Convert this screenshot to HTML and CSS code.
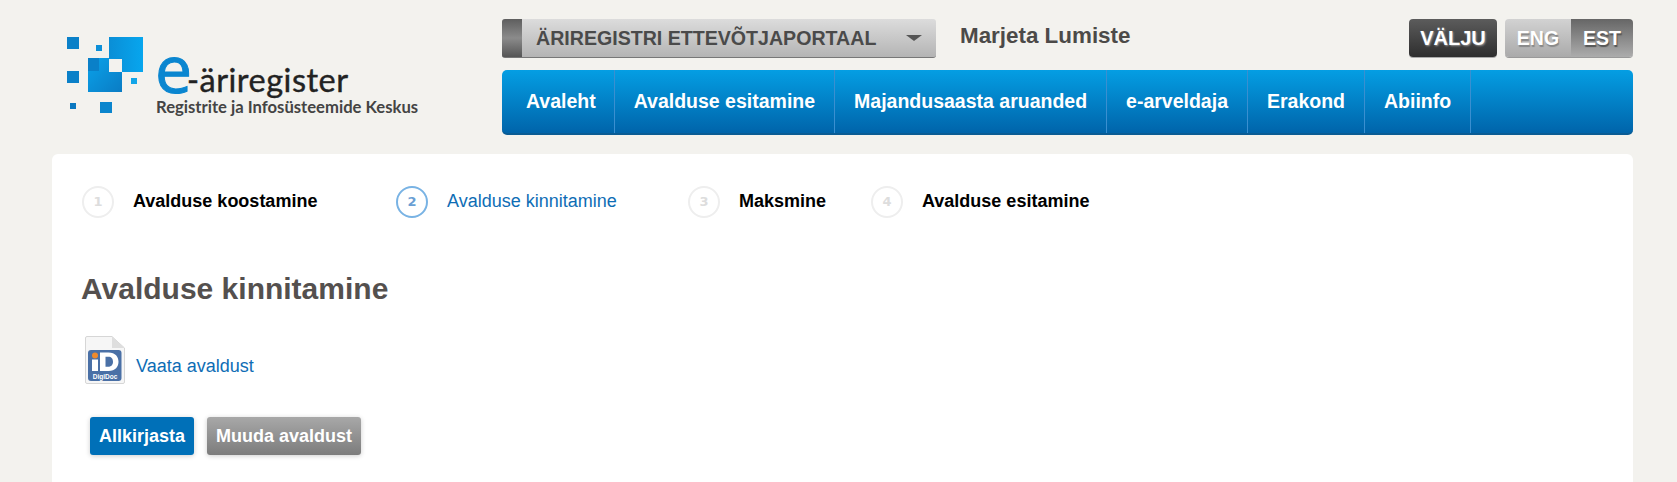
FILE: index.html
```html
<!DOCTYPE html>
<html lang="et">

<head>
    <meta charset="UTF-8">
    <meta name="viewport" content="width=device-width, initial-scale=1.0">
    <title>e-äriregister</title>
    <link rel="stylesheet" href="styles.css">
</head>

<body>
    <header class="header">
        <a class="logo" href="#">
            <svg width="450" height="110" viewBox="0 0 450 110">
                <defs>
                    <linearGradient id="blueA" x1="0" y1="0" x2="1" y2="0">
                        <stop offset="0" stop-color="#0a8ed6"/>
                        <stop offset="1" stop-color="#07a6ee"/>
                    </linearGradient>
                    <linearGradient id="blueB" x1="0" y1="0" x2="1" y2="1">
                        <stop offset="0" stop-color="#0aa2ea"/>
                        <stop offset="1" stop-color="#0a7cc4"/>
                    </linearGradient>
                </defs>
                <g class="logo-squares">
                    <rect x="15" y="17" width="12" height="12" fill="#0a80c8"/>
                    <rect x="44" y="25" width="6" height="6" fill="#0c8fd8"/>
                    <rect x="15" y="51" width="12" height="12" fill="#0a80c8"/>
                    <rect x="57" y="17" width="34" height="35" fill="url(#blueA)"/>
                    <rect x="36" y="38" width="34" height="34" fill="url(#blueB)"/>
                    <rect x="36" y="38" width="11" height="13" fill="#0a80c8"/>
                    <rect x="57" y="39" width="13" height="13" fill="#f3f2ee"/>
                    <rect x="79" y="58" width="6" height="6" fill="#11a5e8"/>
                    <rect x="18" y="83" width="6" height="6" fill="#0a78c0"/>
                    <rect x="48" y="82" width="12" height="11" fill="#0a85cd"/>
                </g>
                <text x="103" y="73"><tspan class="logo-e">e</tspan><tspan class="logo-name" x="135" y="72">-äriregister</tspan></text>
                <text class="logo-sub" x="104" y="93">Registrite ja Infosüsteemide Keskus</text>
            </svg>
        </a>

        <div class="header-right">
            <div class="top-row">
                <div class="portal-select">
                    <span class="portal-name">ÄRIREGISTRI ETTEVÕTJAPORTAAL</span>
                    <span class="portal-arrow"></span>
                </div>
                <span class="user-name">Marjeta Lumiste</span>
                <a class="logout" href="#">VÄLJU</a>
                <div class="lang">
                    <a class="lang-item" href="#">ENG</a>
                    <a class="lang-item active" href="#">EST</a>
                </div>
            </div>

            <nav class="menu">
                <a class="menu-item first" href="#">Avaleht</a>
                <a class="menu-item" href="#">Avalduse esitamine</a>
                <a class="menu-item" href="#">Majandusaasta aruanded</a>
                <a class="menu-item" href="#">e-arveldaja</a>
                <a class="menu-item" href="#">Erakond</a>
                <a class="menu-item" href="#">Abiinfo</a>
            </nav>
        </div>
    </header>

    <main class="card">
        <ol class="steps">
            <li class="step step-1"><span class="step-num">1</span><span class="step-label">Avalduse koostamine</span></li>
            <li class="step step-2 current"><span class="step-num">2</span><span class="step-label">Avalduse kinnitamine</span></li>
            <li class="step step-3"><span class="step-num">3</span><span class="step-label">Maksmine</span></li>
            <li class="step"><span class="step-num">4</span><span class="step-label">Avalduse esitamine</span></li>
        </ol>

        <h1 class="title">Avalduse kinnitamine</h1>

        <div class="document">
            <svg class="doc-icon" width="40" height="48" viewBox="0 0 40 48">
                <path d="M2 .5H27L39.500 12V46a1.500 1.500 0 0 1-1.500 1.500H2A1.500 1.500 0 0 1 .5 46V2A1.500 1.500 0 0 1 2 .5z" fill="#f6f6f6" stroke="#d6d6d6"/>
                <path d="M27 .5V12H39.500z" fill="#dedede"/>
                <rect x="3" y="14" width="33.500" height="31" rx="3" fill="#4a70a6"/>
                <circle cx="10" cy="19.500" r="3" fill="#ef8a2c"/>
                <rect x="7" y="23.500" width="6" height="11.500" fill="#fff"/>
                <path d="M15 16.500h8.500c7 0 10 4.500 10 9.300s-3 9.200-10 9.200H15zm5.500 4.300v9.900h2.700c3.300 0 4.800-2.200 4.800-5s-1.500-4.900-4.800-4.900z" fill="#fff"/>
                <text class="doc-label" x="20" y="42.500" text-anchor="middle">DigiDoc</text>
            </svg>
            <a class="doc-link" href="#">Vaata avaldust</a>
        </div>

        <div class="actions">
            <button class="btn btn-primary" type="button">Allkirjasta</button>
            <button class="btn btn-grey" type="button">Muuda avaldust</button>
        </div>
    </main>
</body>

</html>
```

FILE: styles.css
```css
html,
body {
    height: 100%;
}

body {
    font-family: "Liberation Sans", Arial, sans-serif;
    background-color: #f3f2ee;
    margin: 0;
    padding: 0 44px 0 52px;
    box-sizing: border-box;
    display: flex;
    flex-direction: column;
    overflow: hidden;
}

a {
    text-decoration: none;
}

.header {
    display: flex;
    height: 154px;
    flex-shrink: 0;
}

.logo {
    display: block;
    width: 450px;
    padding-top: 20px;
}

.logo-squares {
    filter: blur(0.5px);
}

.logo-e {
    font-family: "Open Sans", sans-serif;
    font-size: 66px;
    fill: #0a86d0;
    stroke: #0a86d0;
    stroke-width: 1px;
}

.logo-name {
    font-family: Lato, sans-serif;
    font-size: 32.500px;
    letter-spacing: 0.5px;
    fill: #222;
    stroke: #222;
    stroke-width: 0.4px;
}

.logo-sub {
    font-family: Lato, sans-serif;
    font-size: 16.650px;
    font-weight: 700;
    fill: #444;
}

.header-right {
    flex: 1;
    padding-top: 19px;
}

.top-row {
    display: flex;
    align-items: flex-start;
    height: 39px;
}

.portal-select {
    width: 434px;
    height: 39px;
    box-sizing: border-box;
    padding-left: 34px;
    padding-right: 14px;
    display: flex;
    align-items: center;
    justify-content: space-between;
    border-radius: 3px;
    border-bottom: 1px solid #777;
    background: linear-gradient(#5e5e5e, #8b8b8b 50%, #555) left / 20px 100% no-repeat, linear-gradient(#dcdcdc, #b4b4b4);
}

.portal-name {
    font-size: 19.600px;
    font-weight: 700;
    color: #4a4a4a;
}

.portal-arrow {
    border-left: 8px solid transparent;
    border-right: 8px solid transparent;
    border-top: 6px solid #555;
}

.user-name {
    font-size: 22.400px;
    font-weight: 700;
    color: #4c4a48;
    margin-left: 24px;
    margin-top: 4px;
    flex: 1;
}

.logout {
    width: 88px;
    height: 38px;
    line-height: 38px;
    text-align: center;
    border-radius: 4px;
    font-size: 20px;
    font-weight: 700;
    color: #fff;
    text-shadow: 1px 1px 2px #999;
    background: linear-gradient(#5c5c5c, #2e2e2e);
    box-shadow: 0 1px 0 #aaa;
}

.lang {
    display: flex;
    width: 128px;
    height: 38px;
    margin-left: 8px;
    border-radius: 4px;
    overflow: hidden;
    box-shadow: 0 1px 0 #999;
}

.lang-item {
    flex: 1;
    line-height: 38px;
    text-align: center;
    font-size: 19.500px;
    font-weight: 700;
    color: #fff;
    text-shadow: 1px 2px 1px #888;
    background: linear-gradient(#d2d2d2, #aaa);
}

.lang-item.active {
    flex: 0 0 62px;
    text-shadow: 1px 2px 1px #555;
    background: linear-gradient(#666, #acacac);
}

.menu {
    display: flex;
    height: 65px;
    margin-top: 12px;
    border-radius: 5px;
    box-sizing: border-box;
    border-bottom: 2px solid #0a5c94;
    background: linear-gradient(#049ee3, #0064aa);
}

.menu-item {
    display: block;
    padding: 0 19px;
    line-height: 62px;
    font-size: 19.500px;
    font-weight: 700;
    color: #fff;
    border-right: 1px solid #3a8fd0;
}

.menu-item.first {
    padding-left: 24px;
    padding-right: 18px;
}

.card {
    flex: 1;
    background-color: #fff;
    border-radius: 6px 6px 0 0;
    padding: 32px 30px 0;
}

.steps {
    display: flex;
    list-style: none;
    margin: 0;
    padding: 0;
    height: 32px;
}

.step {
    display: flex;
    align-items: center;
    gap: 19px;
    font-size: 18px;
    line-height: 30px;
    font-weight: 700;
    color: #000;
}

.step-label {
    margin-bottom: 2px;
}

.step-1 {
    width: 314px;
}

.step-2 {
    width: 292px;
}

.step-3 {
    width: 183px;
}

.step-num {
    width: 32px;
    height: 32px;
    box-sizing: border-box;
    border: 2px solid #eee;
    border-radius: 50%;
    text-align: center;
    line-height: 28px;
    font-family: "DejaVu Sans", sans-serif;
    font-size: 13px;
    font-weight: 700;
    color: #ddd;
}

.step.current {
    font-weight: 400;
    color: #0e6db5;
}

.current .step-num {
    border-color: #79b3e4;
    color: #6a9fd4;
}

.title {
    margin: 54px 0 0 -1px;
    font-size: 30px;
    line-height: 34px;
    font-weight: 700;
    color: #54504e;
}

.document {
    display: flex;
    align-items: center;
    gap: 11px;
    margin-top: 30px;
    padding-left: 3px;
}

.doc-label {
    font-size: 6.500px;
    font-weight: 700;
    fill: #fff;
}

.doc-link {
    color: #0e6db5;
    font-size: 18px;
    margin-top: 13px;
}

.actions {
    display: flex;
    gap: 13px;
    margin-top: 33px;
    padding-left: 8px;
}

.btn {
    height: 38px;
    padding: 0 9px;
    border: none;
    border-radius: 3px;
    font-family: inherit;
    font-size: 18px;
    font-weight: 700;
    color: #fff;
    box-shadow: 0 1px 5px rgba(0, 0, 0, 0.2);
}

.btn-primary {
    background-color: #0070b8;
}

.btn-grey {
    background: linear-gradient(#a8a8a8, #7c7c7c);
}
```
